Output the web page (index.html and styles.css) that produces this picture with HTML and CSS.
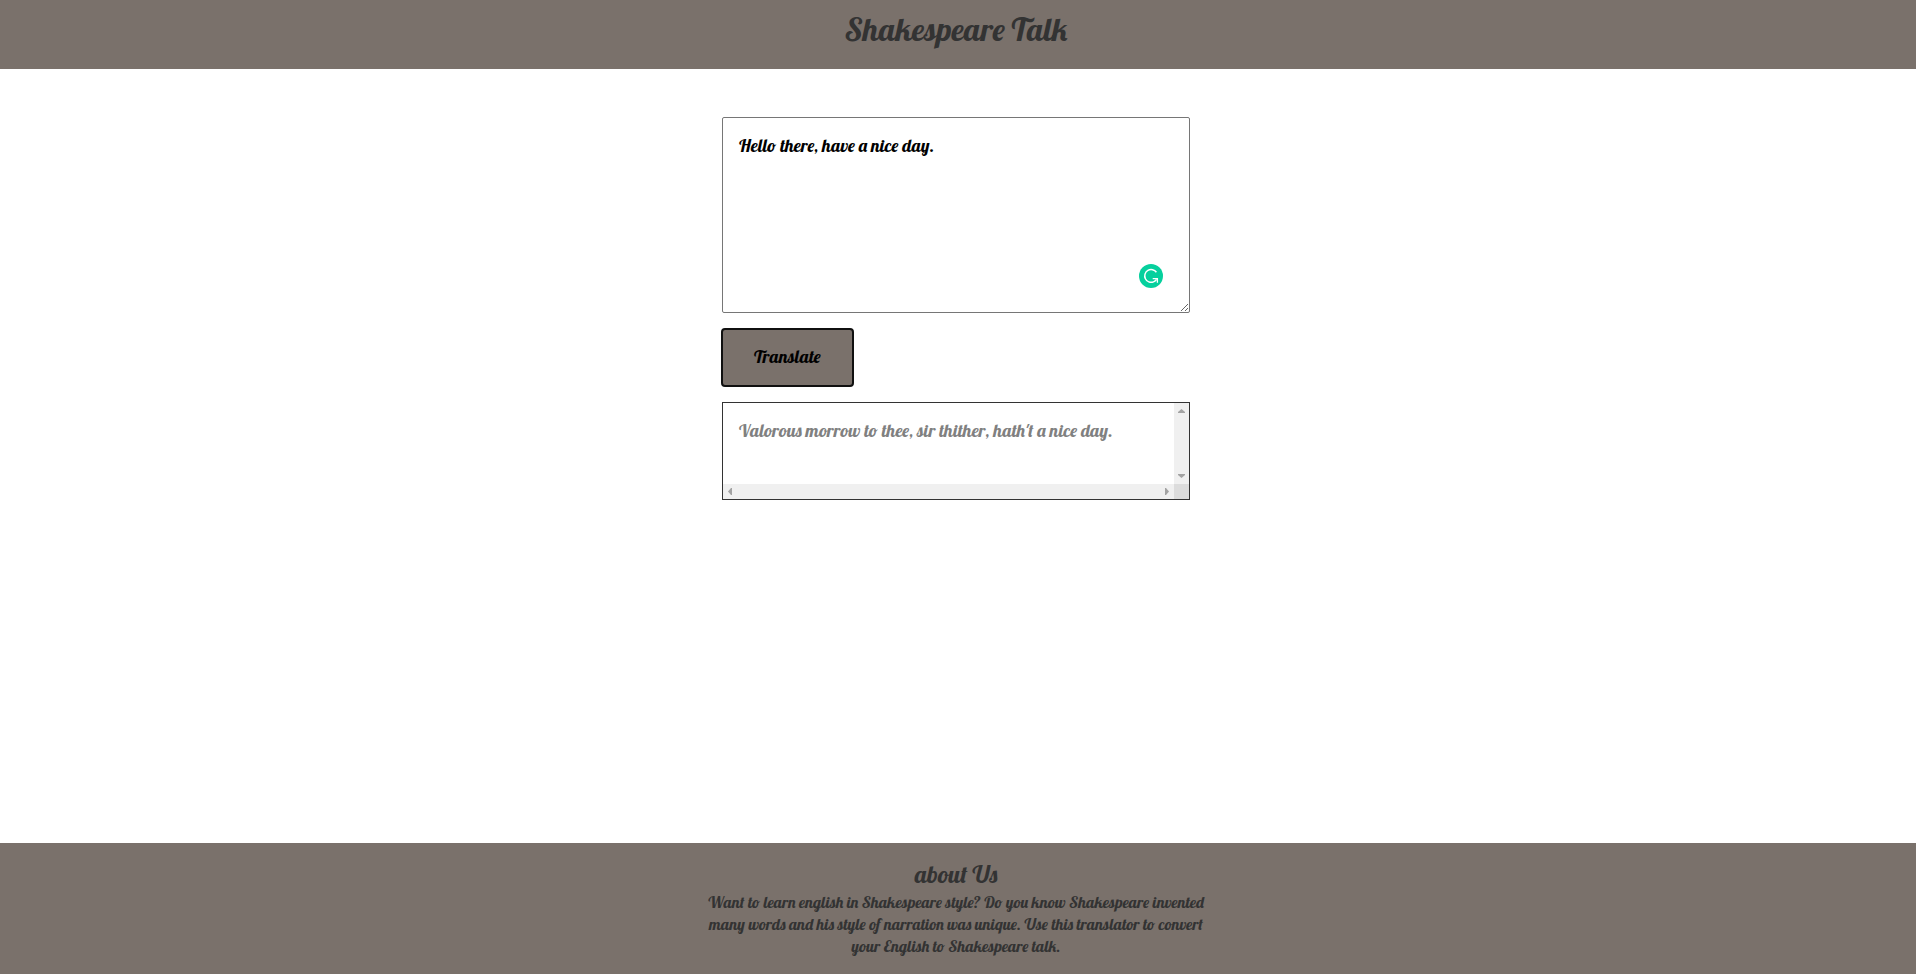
FILE: index.html
```html
<!DOCTYPE html>
<html lang="en">
<head>
<meta charset="utf-8">
<meta name="viewport" content="width=device-width, initial-scale=1">
<title>Shakespeare Talk</title>
<link rel="stylesheet" href="styles.css">
</head>
<body>
<header class="site-header"><h1 class="brand">Shakespeare Talk</h1></header>
<main class="translator">
  <div class="input-wrap">
    <textarea class="input-text" aria-label="Text to translate">Hello there, have a nice day.</textarea>
    <svg class="assistant-badge" viewBox="0 0 24 24" aria-hidden="true">
      <circle cx="12" cy="12" r="12" fill="#06d09d"/>
      <path d="M17.400 8.300A6.400 6.400 0 1 0 14.500 17.900Q16.300 17.200 17.600 15.400" fill="none" stroke="#fff" stroke-width="1.500"/>
      <path d="M13.700 14.600H18.400V18.800" fill="none" stroke="#fff" stroke-width="1.300"/>
    </svg>
  </div>
  <button class="translate-button" type="button">Translate</button>
  <section class="output" aria-label="Translation">
    <p class="output-text">Valorous morrow to thee, sir thither, hath't a nice day.</p>
    <div class="scroll-track scroll-track-y" aria-hidden="true">
      <svg class="arrow" viewBox="0 0 15 15"><path d="M4 10V9L7.500 6L11 9V10Z"/></svg>
      <svg class="arrow" viewBox="0 0 15 15"><path d="M4 5V6L7.500 9L11 6V5Z"/></svg>
    </div>
    <div class="scroll-track" aria-hidden="true">
      <svg class="arrow" viewBox="0 0 15 15"><path d="M9 4H8L5 7.500L8 11H9Z"/></svg>
      <svg class="arrow" viewBox="0 0 15 15"><path d="M6 4H7L10 7.500L7 11H6Z"/></svg>
    </div>
    <div class="scroll-corner" aria-hidden="true"></div>
  </section>
</main>
<footer class="site-footer">
  <h2 class="about-title">about Us</h2>
  <p class="about-text">Want to learn english in Shakespeare style? Do you know Shakespeare invented many words and his style of narration was unique. Use this translator to convert your English to Shakespeare talk.</p>
</footer>
</body>
</html>
```
FILE: styles.css
```css
* {
  box-sizing: border-box;
  margin: 0;
}

body {
  display: flex;
  flex-direction: column;
  min-height: 100vh;
  background: #fff;
  color: #333;
  font-family: Lobster, "Liberation Serif", serif;
  font-weight: 400;
}

.site-header {
  padding: 9px 20px 20px 16px;
  background: #7a716b;
  text-align: center;
}

.brand {
  font-size: 32px;
  font-weight: 400;
  line-height: 40px;
}

.translator {
  display: flex;
  flex: 1;
  flex-direction: column;
  align-items: flex-start;
  gap: 16px;
  width: 100%;
  max-width: 504px;
  margin: 0 auto;
  padding: 48px 20px 48px 16px;
}

.input-wrap {
  position: relative;
  width: 100%;
}

.input-text {
  display: block;
  width: 100%;
  height: 196px;
  padding: 16px;
  border: 1px solid #767676;
  border-radius: 2px;
  background: #fff;
  color: #000;
  font: inherit;
  font-size: 18px;
  line-height: 24px;
  resize: both;
}

.assistant-badge {
  position: absolute;
  right: 27px;
  bottom: 25px;
  width: 24px;
  height: 24px;
}

.translate-button {
  padding: 16px 32px 17px;
  border: 0;
  border-radius: 3px;
  outline: 2px solid #101010;
  outline-offset: -1px;
  background: #7a716b;
  color: #000;
  font: inherit;
  font-size: 18px;
  line-height: 24px;
}

.output {
  display: grid;
  grid-template-columns: 1fr 15px;
  grid-template-rows: 1fr 15px;
  width: 100%;
  min-height: 98px;
  border: 1px solid #333;
}

.output-text {
  padding: 16px;
  color: #808080;
  font-size: 18px;
  line-height: 24px;
}

.scroll-track {
  display: flex;
  justify-content: space-between;
  background: #f0f0f0;
}

.scroll-track-y {
  flex-direction: column;
}

.arrow {
  width: 15px;
  height: 15px;
  fill: #a3a3a3;
}

.scroll-corner {
  background: #dcdcdc;
}

.site-footer {
  padding: 16px 20px 17px 16px;
  background: #7a716b;
  text-align: center;
}

.about-title {
  padding-bottom: 2px;
  font-size: 24px;
  font-weight: 400;
  line-height: 30px;
}

.about-text {
  max-width: 512px;
  margin: 0 auto;
  font-size: 16px;
  line-height: 22px;
}
```
